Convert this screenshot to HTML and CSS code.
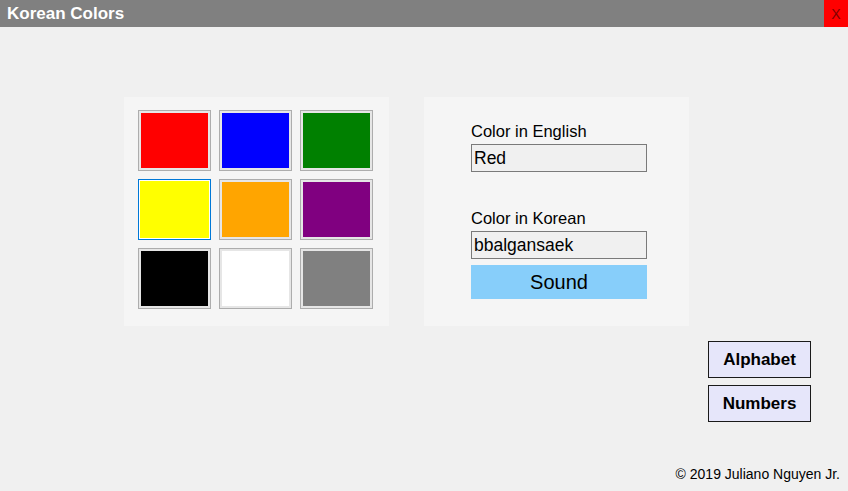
FILE: index.html
```html
<!DOCTYPE html>
<html>
<head>
<meta charset="utf-8">
<link rel="stylesheet" href="styles.css">
</head>
<body>
<div class="window">
  <div class="titlebar">
    <div class="title">Korean Colors</div>
    <div class="close">X</div>
  </div>
  <div class="content">
    <div class="panels">
      <div class="panel swatches">
        <div class="swatch"><span class="fill red"></span></div>
        <div class="swatch"><span class="fill blue"></span></div>
        <div class="swatch"><span class="fill green"></span></div>
        <div class="swatch focused"><span class="fill yellow"></span></div>
        <div class="swatch"><span class="fill orange"></span></div>
        <div class="swatch"><span class="fill purple"></span></div>
        <div class="swatch"><span class="fill black"></span></div>
        <div class="swatch"><span class="fill white"></span></div>
        <div class="swatch"><span class="fill gray"></span></div>
      </div>
      <div class="panel info">
        <div class="label label-en">Color in English</div>
        <div class="textbox">Red</div>
        <div class="label label-ko">Color in Korean</div>
        <div class="textbox">bbalgansaek</div>
        <div class="sound">Sound</div>
      </div>
    </div>
    <div class="navs">
      <div class="nav">Alphabet</div>
      <div class="nav">Numbers</div>
    </div>
    <div class="footer">© 2019 Juliano Nguyen Jr.</div>
  </div>
</div>
</body>
</html>
```
FILE: styles.css
```css
html, body {
  margin: 0;
  padding: 0;
  background: #f0f0f0;
}
.window {
  width: 848px;
  height: 491px;
  background: #f0f0f0;
  display: flex;
  flex-direction: column;
  font-family: "Liberation Sans", Arial, sans-serif;
  color: #000;
  overflow: hidden;
}
.titlebar {
  height: 27px;
  background: #808080;
  display: flex;
  align-items: center;
  justify-content: space-between;
}
.title {
  color: #fff;
  font-weight: bold;
  font-size: 17px;
  padding-left: 7px;
  padding-top: 1px;
}
.close {
  width: 24px;
  height: 27px;
  background: #ff0000;
  color: #800000;
  font-size: 14px;
  display: flex;
  align-items: center;
  justify-content: center;
}
.content {
  flex: 1;
  display: flex;
  flex-direction: column;
  padding-top: 70px;
}
.panels {
  display: flex;
  gap: 35px;
  padding-left: 124px;
}
.panel {
  width: 265px;
  height: 229px;
  background: #f5f5f5;
  box-sizing: border-box;
}
.swatches {
  display: grid;
  grid-template-columns: repeat(3, 73px);
  grid-template-rows: repeat(3, 61px);
  gap: 8px;
  padding: 13px 0 0 14px;
  align-content: start;
}
.swatch {
  box-sizing: border-box;
  border: 1px solid #adadad;
  padding: 2px;
  background: #e6e6e6;
  display: flex;
}
.swatch.focused {
  border-color: #0078d7;
  padding: 1px;
  background: #fff;
}
.fill { flex: 1; }
.red { background: #ff0000; }
.blue { background: #0000ff; }
.green { background: #008000; }
.yellow { background: #ffff00; }
.orange { background: #ffa500; }
.purple { background: #800080; }
.black { background: #000000; }
.white { background: #ffffff; }
.gray { background: #808080; }

.info {
  display: flex;
  flex-direction: column;
  padding-left: 47px;
}
.label {
  font-size: 16.5px;
  line-height: 19px;
}
.label-en { margin-top: 25px; margin-bottom: 3px; }
.label-ko { margin-top: 37px; margin-bottom: 3px; }
.textbox {
  box-sizing: border-box;
  width: 176px;
  height: 28px;
  border: 1px solid #7a7a7a;
  background: #f0f0f0;
  font-size: 17.5px;
  line-height: 26px;
  padding-left: 2px;
}
.sound {
  margin-top: 6px;
  width: 176px;
  height: 34px;
  background: #87cefa;
  font-size: 20px;
  line-height: 34px;
  text-align: center;
}
.navs {
  display: flex;
  flex-direction: column;
  align-items: flex-end;
  gap: 7px;
  padding-right: 37px;
  margin-top: 15px;
}
.nav {
  box-sizing: border-box;
  width: 103px;
  height: 37px;
  border: 1px solid #1a1a1a;
  background: #e6e6fa;
  font-weight: bold;
  font-size: 17px;
  display: flex;
  align-items: center;
  justify-content: center;
}
.footer {
  margin-top: auto;
  align-self: flex-end;
  padding-right: 8px;
  font-size: 14px;
  line-height: 16px;
  margin-bottom: 9px;
}
```
